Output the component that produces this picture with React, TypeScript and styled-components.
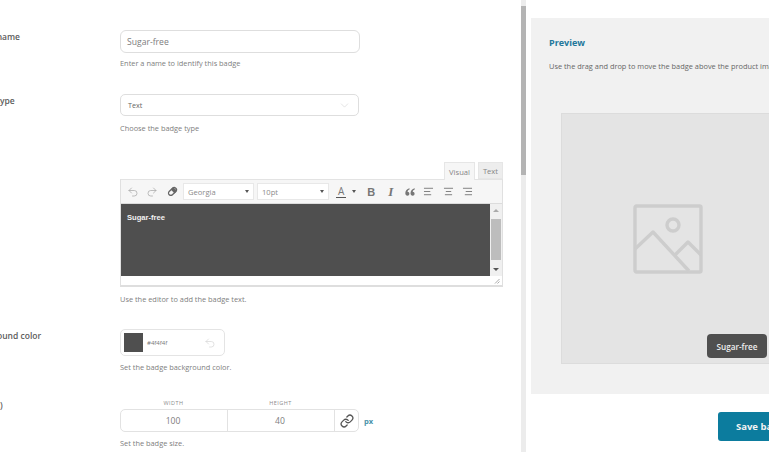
import React from "react";
import styled, { createGlobalStyle } from "styled-components";
import { Undo2, Redo2, ChevronDown, AlignLeft, AlignCenter, AlignRight, Link as LinkIcon } from "lucide-react";

const Global = createGlobalStyle`
  html, body { margin: 0; padding: 0; background: #fff; overflow: hidden; }
  * { box-sizing: border-box; }
  body { font-family: "Open Sans", "Liberation Sans", sans-serif; color: #666; }
`;

const Page = styled.div`
  width: 769px;
  height: 452px;
  overflow: hidden;
  display: flex;
  background: #fff;
`;

const FormPane = styled.div`
  width: 521px;
  flex-shrink: 0;
  padding-top: 30px;
  overflow: hidden;
`;

const Row = styled.div<{ $gap: number }>`
  display: flex;
  margin-bottom: ${(p) => p.$gap}px;
`;

const LabelCell = styled.div`
  width: 120px;
  flex-shrink: 0;
  overflow: hidden;
`;

const Label = styled.div`
  margin-left: -31px;
  white-space: nowrap;
  font-size: 8.5px;
  line-height: 13px;
  font-weight: 600;
  color: #5c5c5c;
`;

const Field = styled.div`
  flex: 1;
  min-width: 0;
`;

const TextInput = styled.div`
  width: 240px;
  height: 23px;
  border: 1px solid #dedede;
  border-radius: 6px;
  padding: 0 6px;
  display: flex;
  align-items: center;
  font-size: 8.6px;
  color: #7d7d7d;
`;

const SelectBox = styled.div`
  width: 239px;
  height: 22px;
  border: 1px solid #dedede;
  border-radius: 5px;
  padding: 0 7px;
  display: flex;
  align-items: center;
  justify-content: space-between;
  font-size: 7.2px;
  color: #666;
`;

const Help = styled.div<{ $top: number }>`
  margin-top: ${(p) => p.$top}px;
  font-size: 7.4px;
  line-height: 11px;
  color: #808080;
`;

const Tabs = styled.div`
  width: 383px;
  height: 17px;
  display: flex;
  justify-content: flex-end;
  align-items: flex-end;
  gap: 3px;
`;

const Tab = styled.div<{ $active?: boolean }>`
  height: ${(p) => (p.$active ? 18 : 17)}px;
  width: ${(p) => (p.$active ? 31 : 25)}px;
  margin-bottom: ${(p) => (p.$active ? -1 : 0)}px;
  position: relative;
  display: flex;
  align-items: center;
  justify-content: center;
  font-size: 7.6px;
  color: #858585;
  background: ${(p) => (p.$active ? "#f6f6f6" : "#ededed")};
  border: 1px solid #e6e6e6;
  border-bottom: ${(p) => (p.$active ? "none" : "1px solid #e6e6e6")};
`;

const Editor = styled.div`
  width: 383px;
  border: 1px solid #e0e0e0;
  border-top: 1px solid #e3e3e3;
  border-bottom: 2px solid #dedede;
`;

const Toolbar = styled.div`
  height: 24px;
  background: #f6f6f6;
  border-bottom: 1px solid #dcdcdc;
  display: flex;
  align-items: center;
  padding-left: 2px;
  color: #9a9a9a;
`;

const ToolIcon = styled.span<{ $w: number; $color?: string }>`
  width: ${(p) => p.$w}px;
  display: inline-flex;
  align-items: center;
  justify-content: center;
  color: ${(p) => p.$color ?? "#a8a8a8"};
`;

const ToolSelect = styled.div<{ $w: number }>`
  width: ${(p) => p.$w}px;
  height: 17px;
  margin-right: 3px;
  background: #fff;
  border: 1px solid #e8e8e8;
  padding: 0 4px;
  display: flex;
  align-items: center;
  justify-content: space-between;
  font-size: 7.6px;
  color: #8a8a8a;
`;

const Caret = styled.span`
  width: 0;
  height: 0;
  border-left: 2.5px solid transparent;
  border-right: 2.5px solid transparent;
  border-top: 3px solid #555;
`;

const ColorA = styled.span`
  font-size: 10px;
  line-height: 11px;
  color: #777;
  border-bottom: 1.5px solid #555;
  padding: 0 2px;
`;

const ToolGlyph = styled.span<{ $italic?: boolean; $w: number }>`
  width: ${(p) => p.$w}px;
  text-align: center;
  font-family: ${(p) => (p.$italic ? '"Liberation Serif", serif' : '"Liberation Sans", sans-serif')};
  font-weight: 700;
  font-style: ${(p) => (p.$italic ? "italic" : "normal")};
  font-size: ${(p) => (p.$italic ? 13 : 11)}px;
  color: #777;
`;

const EditorBody = styled.div`
  height: 72px;
  background: #4f4f4f;
  display: flex;
  justify-content: space-between;
`;

const EditorText = styled.div`
  padding: 8px 6px;
  font-family: "Liberation Sans", sans-serif;
  font-weight: 700;
  font-size: 7.6px;
  line-height: 11px;
  color: #f2f2f2;
`;

const ScrollTrack = styled.div`
  width: 12px;
  background: #f0f0f0;
  display: flex;
  flex-direction: column;
  align-items: center;
  justify-content: space-between;
`;

const ScrollArrow = styled.span<{ $up?: boolean }>`
  width: 0;
  height: 0;
  margin: 5px 0;
  border-left: 3px solid transparent;
  border-right: 3px solid transparent;
  ${(p) => (p.$up ? "border-bottom: 3px solid #aaa;" : "border-top: 3px solid #555;")}
`;

const ScrollThumb = styled.div`
  width: 10px;
  height: 41px;
  margin-bottom: 2px;
  background: #bdbdbd;
`;

const StatusBar = styled.div`
  height: 9px;
  background: #fff;
  display: flex;
  justify-content: flex-end;
  align-items: flex-end;
  padding: 0 2px 1px 0;
`;

const ColorBox = styled.div`
  width: 105px;
  height: 27px;
  border: 1px solid #e4e4e4;
  border-radius: 5px;
  padding: 3px;
  display: flex;
  align-items: center;
`;

const Swatch = styled.div`
  width: 19px;
  height: 19px;
  background: #4f4f4f;
`;

const ColorCode = styled.span`
  flex: 1;
  margin-left: 4px;
  font-size: 6px;
  color: #777;
`;

const UndoSlot = styled.span`
  margin-right: 5px;
  display: inline-flex;
  color: #d2d2d2;
`;

const Caption = styled.div`
  height: 11px;
  display: flex;
  width: 214px;
`;

const CaptionCell = styled.span`
  flex: 1;
  text-align: center;
  font-size: 5.5px;
  line-height: 11px;
  letter-spacing: 0.5px;
  color: #8c8c8c;
`;

const SizeRow = styled.div`
  display: flex;
  align-items: center;
`;

const SizeGroup = styled.div`
  width: 239px;
  height: 23px;
  border: 1px solid #e2e2e2;
  border-radius: 5px;
  display: flex;
`;

const SizeCell = styled.div`
  width: 107px;
  padding-right: 2px;
  display: flex;
  align-items: center;
  justify-content: center;
  font-size: 8.6px;
  color: #7d7d7d;
  border-right: 1px solid #e2e2e2;
`;

const LinkCell = styled.div`
  flex: 1;
  display: flex;
  align-items: center;
  justify-content: center;
  color: #555;
`;

const Unit = styled.span`
  margin-left: 5px;
  font-size: 7.6px;
  font-weight: 700;
  color: #4a93aa;
`;

const ScrollRail = styled.div`
  width: 5px;
  height: 452px;
  flex-shrink: 0;
  background: #ececec;
`;

const RailThumb = styled.div`
  width: 5px;
  height: 169px;
  margin-top: 6px;
  background: #b4b4b4;
`;

const PreviewPane = styled.div`
  flex-shrink: 0;
  width: 360px;
  margin-left: 5px;
  padding-top: 18px;
`;

const PreviewCard = styled.div`
  height: 376px;
  background: #f1f1f1;
  padding: 18px;
`;

const PreviewTitle = styled.div`
  font-size: 9px;
  line-height: 14px;
  font-weight: 700;
  color: #23779b;
`;

const PreviewHelp = styled.div`
  margin-top: 11px;
  font-size: 7.4px;
  line-height: 11px;
  white-space: nowrap;
  color: #666;
`;

const Canvas = styled.div`
  position: relative;
  width: 300px;
  height: 251px;
  margin: 41px 0 0 12px;
  background: #e4e4e4;
  border: 1px solid #dcdcdc;
  display: flex;
  align-items: flex-start;
`;

const PlaceholderIcon = styled.svg`
  margin: 90px 0 0 71px;
`;

const Badge = styled.div`
  position: absolute;
  left: 145px;
  top: 220px;
  width: 60px;
  height: 24px;
  border-radius: 4px;
  background: #4f4f4f;
  color: #eee;
  font-size: 8.2px;
  font-weight: 600;
  display: flex;
  align-items: center;
  justify-content: center;
`;

const Actions = styled.div`
  padding: 18px 0 0 187px;
`;

const SaveButton = styled.button`
  width: 120px;
  height: 29px;
  border: none;
  border-radius: 3px;
  background: #0c7c9e;
  color: #f3f3f3;
  font-family: "Open Sans", sans-serif;
  font-size: 9.5px;
  font-weight: 700;
  text-align: left;
  padding: 0 0 0 18px;
`;

export default function App() {
  return (
    <Page>
      <Global />
      <FormPane>
        <Row $gap={25}>
          <LabelCell><Label>Badge name</Label></LabelCell>
          <Field>
            <TextInput>Sugar-free</TextInput>
            <Help $top={5}>Enter a name to identify this badge</Help>
          </Field>
        </Row>
        <Row $gap={28}>
          <LabelCell><Label>Badge type</Label></LabelCell>
          <Field>
            <SelectBox>Text<ChevronDown size={13} strokeWidth={1} color="#ccc" /></SelectBox>
            <Help $top={7}>Choose the badge type</Help>
          </Field>
        </Row>
        <Row $gap={24}>
          <LabelCell />
          <Field>
            <Tabs>
              <Tab $active>Visual</Tab>
              <Tab>Text</Tab>
            </Tabs>
            <Editor>
              <Toolbar>
                <ToolIcon $w={19}><Undo2 size={12} strokeWidth={1.5} /></ToolIcon>
                <ToolIcon $w={19}><Redo2 size={12} strokeWidth={1.5} /></ToolIcon>
                <ToolIcon $w={22} $color="#666">
                  <svg width="11" height="11" viewBox="0 0 11 11" fill="none" stroke="#666" strokeWidth="1.3">
                    <rect x="0.9" y="3.2" width="9.2" height="4.6" rx="2.2" transform="rotate(-45 5.5 5.5)" />
                    <path d="M6.2 1.9 9.1 4.8 7.6 6.6 4.6 3.6Z" fill="#666" />
                  </svg>
                </ToolIcon>
                <ToolSelect $w={71}>Georgia<Caret /></ToolSelect>
                <ToolSelect $w={72}>10pt<Caret /></ToolSelect>
                <ToolIcon $w={4} />
                <ColorA>A</ColorA>
                <ToolIcon $w={16}><Caret /></ToolIcon>
                <ToolGlyph $w={18}>B</ToolGlyph>
                <ToolGlyph $w={21} $italic>I</ToolGlyph>
                <ToolIcon $w={18}>
                  <svg width="10" height="8" viewBox="0 0 10 8" fill="#777">
                    <path d="M4.4 0.3C2 1 0.3 2.8 0.3 5.2 0.3 6.8 1.2 7.7 2.4 7.7S4.4 6.8 4.4 5.7 3.6 3.9 2.5 3.8C2.7 2.8 3.5 1.9 4.7 1.3ZM9.6 0.3C7.2 1 5.5 2.8 5.5 5.2 5.5 6.8 6.4 7.7 7.6 7.7S9.6 6.8 9.6 5.7 8.8 3.9 7.7 3.8C7.9 2.8 8.7 1.9 9.9 1.3Z" />
                  </svg>
                </ToolIcon>
                <ToolIcon $w={19} $color="#777"><AlignLeft size={11} /></ToolIcon>
                <ToolIcon $w={20} $color="#777"><AlignCenter size={11} /></ToolIcon>
                <ToolIcon $w={19} $color="#777"><AlignRight size={11} /></ToolIcon>
              </Toolbar>
              <EditorBody>
                <EditorText>Sugar-free</EditorText>
                <ScrollTrack>
                  <ScrollArrow $up />
                  <ScrollThumb />
                  <ScrollArrow />
                </ScrollTrack>
              </EditorBody>
              <StatusBar>
                <svg width="6" height="6" viewBox="0 0 6 6" stroke="#aaa" strokeWidth="1">
                  <path d="M5.5 1 1 5.5M5.5 3.5 3.5 5.5" />
                </svg>
              </StatusBar>
            </Editor>
            <Help $top={7}>Use the editor to add the badge text.</Help>
          </Field>
        </Row>
        <Row $gap={25}>
          <LabelCell><Label>Background color</Label></LabelCell>
          <Field>
            <ColorBox>
              <Swatch />
              <ColorCode>#4f4f4f</ColorCode>
              <UndoSlot><Undo2 size={12} strokeWidth={1.3} /></UndoSlot>
            </ColorBox>
            <Help $top={6}>Set the badge background color.</Help>
          </Field>
        </Row>
        <Row $gap={0}>
          <LabelCell><Label>Size (px)</Label></LabelCell>
          <Field>
            <Caption>
              <CaptionCell>WIDTH</CaptionCell>
              <CaptionCell>HEIGHT</CaptionCell>
            </Caption>
            <SizeRow>
              <SizeGroup>
                <SizeCell>100</SizeCell>
                <SizeCell>40</SizeCell>
                <LinkCell><LinkIcon size={14} strokeWidth={2.2} /></LinkCell>
              </SizeGroup>
              <Unit>px</Unit>
            </SizeRow>
            <Help $top={6}>Set the badge size.</Help>
          </Field>
        </Row>
      </FormPane>
      <ScrollRail><RailThumb /></ScrollRail>
      <PreviewPane>
        <PreviewCard>
          <PreviewTitle>Preview</PreviewTitle>
          <PreviewHelp>Use the drag and drop to move the badge above the product image.</PreviewHelp>
          <Canvas>
            <PlaceholderIcon width="70" height="70" viewBox="0 0 70 70" fill="none" stroke="#cdcdcd" strokeWidth="3.4" strokeLinejoin="round">
              <rect x="2" y="2" width="66" height="66" rx="1.5" />
              <circle cx="40" cy="21" r="6" />
              <path d="M2 45 20 28l36 39M42 51l13-13 13 13" />
            </PlaceholderIcon>
            <Badge>Sugar-free</Badge>
          </Canvas>
        </PreviewCard>
        <Actions>
          <SaveButton>Save badge</SaveButton>
        </Actions>
      </PreviewPane>
    </Page>
  );
}
